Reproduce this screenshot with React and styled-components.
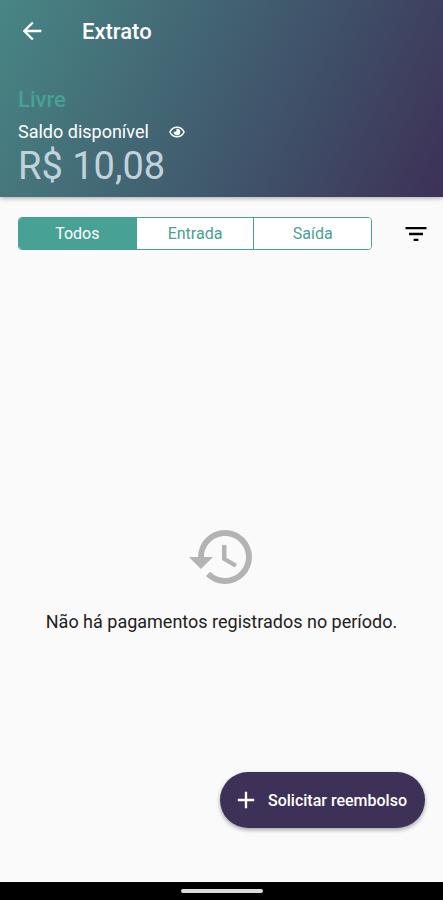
import React, { useState } from "react";
import styled, { createGlobalStyle } from "styled-components";
import { MdAdd, MdArrowBack, MdFilterList, MdHistory } from "react-icons/md";

const filters = ["Todos", "Entrada", "Saída"];

function App() {
  const [active, setActive] = useState("Todos");
  const [visible, setVisible] = useState(true);

  return (
    <Screen>
      <GlobalStyle />
      <Header>
        <TopBar>
          <IconButton aria-label="Voltar">
            <MdArrowBack size={28} />
          </IconButton>
          <h1>Extrato</h1>
        </TopBar>
        <Balance>
          <h2>Livre</h2>
          <BalanceLabel>
            <span>Saldo disponível</span>
            <IconButton
              aria-label="Mostrar saldo"
              onClick={() => setVisible(!visible)}
            >
              <EyeIcon />
            </IconButton>
          </BalanceLabel>
          <Amount>{visible ? "R$ 10,08" : "R$ ••••"}</Amount>
        </Balance>
      </Header>
      <FilterBar>
        <Segments>
          {filters.map((name) => (
            <Segment
              key={name}
              $active={active === name}
              aria-pressed={active === name}
              onClick={() => setActive(name)}
            >
              {name}
            </Segment>
          ))}
        </Segments>
        <IconButton aria-label="Filtrar">
          <MdFilterList size={28} />
        </IconButton>
      </FilterBar>
      <Empty>
        <MdHistory size={72} />
        <p>Não há pagamentos registrados no período.</p>
      </Empty>
      <Actions>
        <Fab>
          <MdAdd size={28} />
          Solicitar reembolso
        </Fab>
      </Actions>
      <NavBar>
        <NavHandle />
      </NavBar>
    </Screen>
  );
}

function EyeIcon() {
  return (
    <svg width="16" height="12" viewBox="0 0 16 12" fill="none">
      <path
        d="M0.9 6C2.4 2.9 5 1.2 8 1.2S13.6 2.9 15.1 6C13.6 9.1 11 10.8 8 10.8S2.4 9.1 0.9 6Z"
        stroke="currentColor"
        strokeWidth="1.5"
      />
      <path
        d="M8 2.7a3.3 3.3 0 1 1-3.2 2.6 1.6 1.6 0 0 0 2.3-2.4A3.3 3.3 0 0 1 8 2.7Z"
        fill="currentColor"
      />
    </svg>
  );
}

const GlobalStyle = createGlobalStyle`
  * {
    box-sizing: border-box;
  }

  body {
    margin: 0;
    background: #fafafa;
    font-family: Roboto, "Liberation Sans", sans-serif;
  }

  h1, h2, p {
    margin: 0;
  }

  button {
    font-family: inherit;
    cursor: pointer;
  }
`;

const Screen = styled.div`
  min-height: 100vh;
  display: flex;
  flex-direction: column;
  background: #fafafa;
`;

const Header = styled.header`
  padding: 16px 18px 8px;
  color: white;
  background: linear-gradient(115deg, #488685 0%, #3f5068 65%, #3d3157 100%);
  box-shadow: 0 1px 5px rgba(0, 0, 0, 0.35);
`;

const IconButton = styled.button`
  display: flex;
  padding: 0;
  border: none;
  background: none;
  color: inherit;
`;

const TopBar = styled.div`
  display: flex;
  align-items: center;
  gap: 36px;
  height: 30px;

  h1 {
    font-size: 22px;
    font-weight: 500;
  }
`;

const Balance = styled.div`
  margin-top: 40px;

  h2 {
    color: #48a195;
    font-size: 22px;
    font-weight: 500;
    line-height: 28px;
  }
`;

const BalanceLabel = styled.div`
  display: flex;
  align-items: center;
  gap: 20px;
  margin-top: 6px;
  font-size: 18px;
  line-height: 24px;
`;

const Amount = styled.p`
  color: #c0d2da;
  font-size: 38px;
  line-height: 45px;
`;

const FilterBar = styled.div`
  display: flex;
  align-items: center;
  gap: 30px;
  padding: 20px 13px 0 18px;
`;

const Segments = styled.div`
  flex: 1;
  display: flex;
  height: 33px;
  border: 1px solid #48a195;
  border-radius: 4px;
  background: white;
  overflow: hidden;
`;

const Segment = styled.button`
  flex: 1;
  padding: 0;
  border: none;
  background: ${(props) => (props.$active ? "#48a195" : "white")};
  color: ${(props) => (props.$active ? "white" : "#48a195")};
  font-size: 16px;

  & + & {
    border-left: 1px solid #48a195;
  }
`;

const Empty = styled.main`
  flex: 1;
  display: flex;
  flex-direction: column;
  align-items: center;
  justify-content: flex-end;
  gap: 16px;
  padding: 0 16px;
  color: #b3b3b3;

  p {
    color: #212121;
    font-size: 18px;
    line-height: 26px;
    text-align: center;
  }
`;

const Actions = styled.div`
  display: flex;
  justify-content: flex-end;
  padding: 137px 18px 54px;
`;

const Fab = styled.button`
  display: flex;
  align-items: center;
  gap: 8px;
  height: 56px;
  padding: 0 18px 0 12px;
  border: none;
  border-radius: 28px;
  background: #3d3157;
  color: white;
  font-size: 16px;
  font-weight: 500;
  box-shadow: 0 2px 4px rgba(0, 0, 0, 0.35);
`;

const NavBar = styled.footer`
  display: flex;
  align-items: center;
  justify-content: center;
  height: 18px;
  background: black;
`;

const NavHandle = styled.div`
  width: 82px;
  height: 4px;
  border-radius: 2px;
  background: #dcdcdc;
`;

export default App;
